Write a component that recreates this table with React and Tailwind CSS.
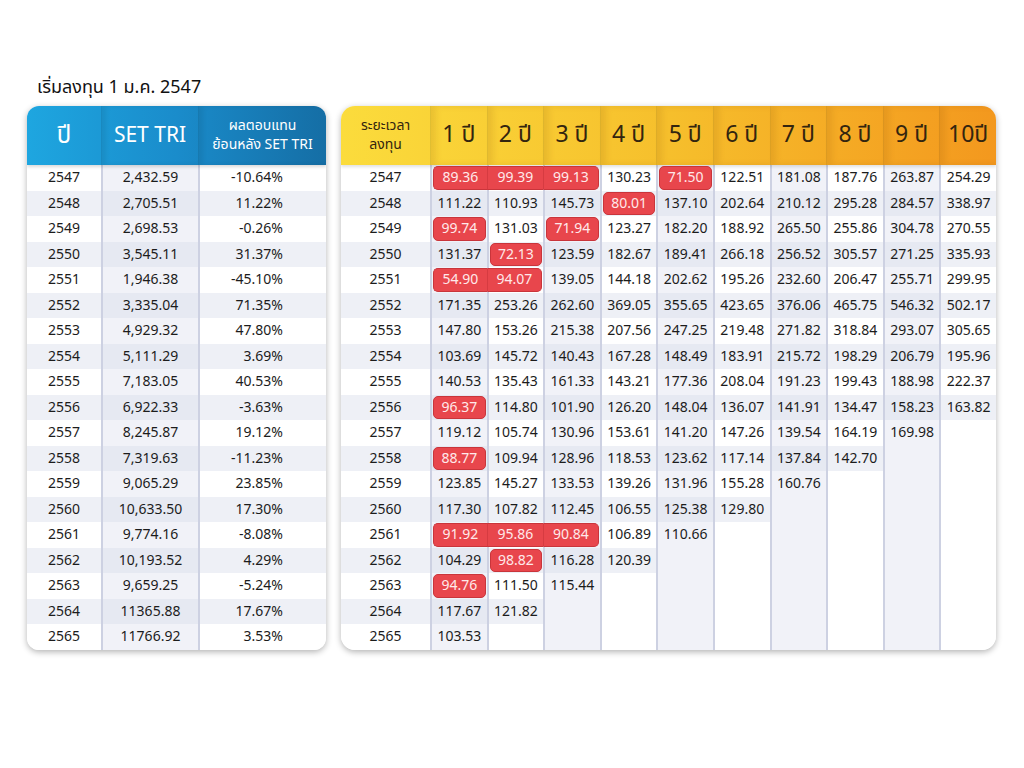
import React from "react";

const FONT = { fontFamily: '"Noto Sans Thai", "Lato", "Noto Sans", sans-serif' };

const left = [
  ["2547", "2,432.59", "-10.64%"],
  ["2548", "2,705.51", "11.22%"],
  ["2549", "2,698.53", "-0.26%"],
  ["2550", "3,545.11", "31.37%"],
  ["2551", "1,946.38", "-45.10%"],
  ["2552", "3,335.04", "71.35%"],
  ["2553", "4,929.32", "47.80%"],
  ["2554", "5,111.29", "3.69%"],
  ["2555", "7,183.05", "40.53%"],
  ["2556", "6,922.33", "-3.63%"],
  ["2557", "8,245.87", "19.12%"],
  ["2558", "7,319.63", "-11.23%"],
  ["2559", "9,065.29", "23.85%"],
  ["2560", "10,633.50", "17.30%"],
  ["2561", "9,774.16", "-8.08%"],
  ["2562", "10,193.52", "4.29%"],
  ["2563", "9,659.25", "-5.24%"],
  ["2564", "11365.88", "17.67%"],
  ["2565", "11766.92", "3.53%"],
];

const right = [
  ["2547", "89.36 99.39 99.13 130.23 71.50 122.51 181.08 187.76 263.87 254.29", [1, 2, 3, 5]],
  ["2548", "111.22 110.93 145.73 80.01 137.10 202.64 210.12 295.28 284.57 338.97", [4]],
  ["2549", "99.74 131.03 71.94 123.27 182.20 188.92 265.50 255.86 304.78 270.55", [1, 3]],
  ["2550", "131.37 72.13 123.59 182.67 189.41 266.18 256.52 305.57 271.25 335.93", [2]],
  ["2551", "54.90 94.07 139.05 144.18 202.62 195.26 232.60 206.47 255.71 299.95", [1, 2]],
  ["2552", "171.35 253.26 262.60 369.05 355.65 423.65 376.06 465.75 546.32 502.17", []],
  ["2553", "147.80 153.26 215.38 207.56 247.25 219.48 271.82 318.84 293.07 305.65", []],
  ["2554", "103.69 145.72 140.43 167.28 148.49 183.91 215.72 198.29 206.79 195.96", []],
  ["2555", "140.53 135.43 161.33 143.21 177.36 208.04 191.23 199.43 188.98 222.37", []],
  ["2556", "96.37 114.80 101.90 126.20 148.04 136.07 141.91 134.47 158.23 163.82", [1]],
  ["2557", "119.12 105.74 130.96 153.61 141.20 147.26 139.54 164.19 169.98", []],
  ["2558", "88.77 109.94 128.96 118.53 123.62 117.14 137.84 142.70", [1]],
  ["2559", "123.85 145.27 133.53 139.26 131.96 155.28 160.76", []],
  ["2560", "117.30 107.82 112.45 106.55 125.38 129.80", []],
  ["2561", "91.92 95.86 90.84 106.89 110.66", [1, 2, 3]],
  ["2562", "104.29 98.82 116.28 120.39", [2]],
  ["2563", "94.76 111.50 115.44", [1]],
  ["2564", "117.67 121.82", []],
  ["2565", "103.53", []],
];

const SEP = "border-l-2 border-[#cdd1e2]";

function cellBg(rowIdx, colLight, hasData) {
  const stripe = rowIdx % 2 === 1 && hasData;
  if (stripe && colLight) return "bg-[#e6e9f2]";
  if (stripe) return "bg-[#eef0f6]";
  if (colLight) return "bg-[#f1f2f8]";
  return "bg-white";
}

function LeftTable() {
  return (
    <div className="w-[299px] rounded-[12px] bg-white shadow-[0_2px_6px_rgba(0,0,0,0.3)] overflow-hidden">
      <div className="flex h-[59px] bg-gradient-to-r from-[#1ea6e0] via-[#1a8ccb] to-[#156ea5] text-white shadow-[0_2px_3px_rgba(0,0,0,0.15)] relative">
        <div className="w-[74px] flex items-center justify-center text-[24px]">ปี</div>
        <div className="w-[97px] flex items-center justify-center text-[21px] border-l border-black/10 shadow-[inset_4px_0_5px_rgba(0,0,0,0.08)]">SET TRI</div>
        <div className="flex-1 flex flex-col items-center justify-center gap-[1px] text-[14px] leading-[18px] border-l border-black/10 shadow-[inset_4px_0_5px_rgba(0,0,0,0.08)]">
          <span className="block h-[18px]">ผลตอบแทน</span>
          <span className="block h-[18px]">ย้อนหลัง SET TRI</span>
        </div>
      </div>
      <div className="text-[14px] text-[#1c1c1c]">
        {left.map((r, i) => (
          <div key={r[0]} className="flex h-[25.5px]">
            <div className={`w-[74px] flex items-center justify-center ${cellBg(i, false, true)}`}>{r[0]}</div>
            <div className={`w-[97px] flex items-center justify-center ${SEP} ${cellBg(i, true, true)}`}>{r[1]}</div>
            <div className={`flex-1 flex items-center justify-end pr-[43px] ${SEP} ${cellBg(i, false, true)}`}>{r[2]}</div>
          </div>
        ))}
      </div>
    </div>
  );
}

const HEADS = ["1 ปี", "2 ปี", "3 ปี", "4 ปี", "5 ปี", "6 ปี", "7 ปี", "8 ปี", "9 ปี", "10ปี"];

function RightTable() {
  return (
    <div className="w-[655px] rounded-[14px] bg-white shadow-[0_2px_6px_rgba(0,0,0,0.3)] overflow-hidden">
      <div className="flex h-[59px] bg-gradient-to-r from-[#fbdc3c] via-[#f6bf2c] to-[#f3981e] text-[#33250f] shadow-[0_2px_3px_rgba(0,0,0,0.12)] relative">
        <div className="w-[89px] flex flex-col items-center justify-center gap-[1px] text-[14px] leading-[18px]">
          <span className="block h-[18px]">ระยะเวลา</span>
          <span className="block h-[18px]">ลงทุน</span>
        </div>
        {HEADS.map((h) => (
          <div key={h} className="flex-1 flex items-center justify-center text-[23px] border-l border-black/10 shadow-[inset_5px_0_6px_rgba(120,60,0,0.12)]">
            {h}
          </div>
        ))}
      </div>
      <div className="text-[14px] text-[#1c1c1c]">
        {right.map(([year, vals, reds], i) => {
          const v = vals.split(" ");
          return (
            <div key={year} className="flex h-[25.5px]">
              <div className={`w-[89px] flex items-center justify-center ${cellBg(i, false, true)}`}>{year}</div>
              {Array.from({ length: 10 }).map((_, c) => {
                const col = c + 1;
                const val = v[c];
                const has = val !== undefined;
                const isRed = reds.includes(col);
                const prevRed = reds.includes(col - 1);
                const nextRed = reds.includes(col + 1);
                const colLight = col % 2 === 1;
                return (
                  <div key={c} className={`flex-1 flex items-stretch ${SEP} ${cellBg(i, colLight, has)}`}>
                    {isRed ? (
                      <div
                        className={`flex-1 my-[1px] flex items-center justify-center bg-[#e8464c] text-[#ffe9ea] border-y border-[#c9353b] relative ${
                          prevRed ? "-ml-[2px] border-l border-l-[#d63b41]" : "rounded-l-[5px] border-l ml-[1px]"
                        } ${nextRed ? "" : "rounded-r-[5px] border-r mr-[1px]"}`}
                      >
                        {val}
                      </div>
                    ) : (
                      <div className="flex-1 flex items-center justify-center">{has ? val : ""}</div>
                    )}
                  </div>
                );
              })}
            </div>
          );
        })}
      </div>
    </div>
  );
}

export default function App() {
  return (
    <div className="w-[1024px] h-[768px] bg-white relative" style={FONT}>
      <div className="pt-[74px] pl-[37px] text-[18px] text-[#111] h-[106px]">เริ่มลงทุน 1 ม.ค. 2547</div>
      <div className="flex gap-[15px] pl-[27px]">
        <LeftTable />
        <RightTable />
      </div>
    </div>
  );
}
